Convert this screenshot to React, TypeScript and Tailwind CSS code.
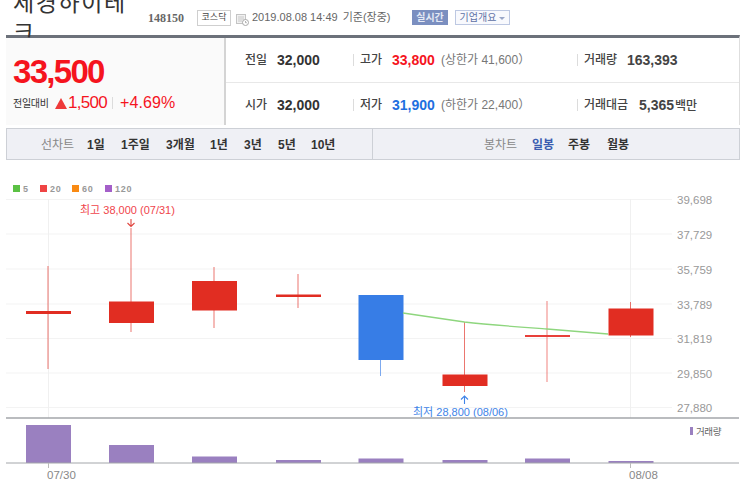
const KR = "font-['Liberation_Sans','Noto_Sans_CJK_KR',sans-serif]";

const candles = [
  { x: 48, top: 266, bottom: 369, open: 311, close: 314, color: "#e12d22" },
  { x: 131, top: 228, bottom: 332, open: 301.5, close: 323, color: "#e12d22" },
  { x: 214, top: 267, bottom: 328, open: 281, close: 310.5, color: "#e12d22" },
  { x: 298, top: 274, bottom: 308, open: 294.5, close: 297, color: "#e12d22" },
  { x: 380.5, top: 295, bottom: 376, open: 295, close: 360, color: "#377de6" },
  { x: 464.5, top: 322, bottom: 392, open: 374.5, close: 386, color: "#e12d22" },
  { x: 547, top: 301, bottom: 382, open: 335, close: 337, color: "#e8403a" },
  { x: 630.5, top: 302, bottom: 337, open: 308.5, close: 335.5, color: "#e12d22" },
];

const volumes = [425, 445, 456.5, 460, 458.5, 460, 458.5, 461];
const yLabels = [
  { y: 199.5, label: "39,698" },
  { y: 234, label: "37,729" },
  { y: 269, label: "35,759" },
  { y: 304, label: "33,789" },
  { y: 338.5, label: "31,819" },
  { y: 373, label: "29,850" },
  { y: 407.5, label: "27,880" },
];
const legend = [
  { x: 13, color: "#5bc144", label: "5" },
  { x: 40, color: "#ef4444", label: "20" },
  { x: 72, color: "#f98a13", label: "60" },
  { x: 105, color: "#a45fc9", label: "120" },
];

const Sep = ({ className = "" }: { className?: string }) => (
  <span className={`h-3 w-px bg-[#dcdcdc] ${className}`} />
);

const Row = ({
  first,
  firstValue,
  second,
  secondValue,
  secondColor,
  limit,
  third,
  thirdValue,
  thirdGap,
}: {
  first: string;
  firstValue: string;
  second: string;
  secondValue: string;
  secondColor: string;
  limit: string;
  third: string;
  thirdValue: React.ReactNode;
  thirdGap: string;
}) => (
  <div className="flex h-[44px] items-center pl-[19px] text-[12px] text-[#444]">
    <span className="w-[32px] font-medium">{first}</span>
    <span className="w-[76px] text-[14px] font-bold text-[#333]">{firstValue}</span>
    <Sep />
    <span className="ml-[6px] w-[32px] font-medium">{second}</span>
    <span className={`w-[49px] text-[14px] font-bold ${secondColor}`}>{secondValue}</span>
    <span className="w-[136px] text-[12px] text-[#777]">{limit}</span>
    <Sep />
    <span className={`ml-[6px] font-medium ${thirdGap}`}>{third}</span>
    {thirdValue}
  </div>
);

const ToolItem = ({ label, className }: { label: string; className: string }) => (
  <span className={`absolute top-[8px] text-[12px] font-bold leading-[16px] ${className}`}>{label}</span>
);

export default function App() {
  return (
    <div className={`h-[484px] w-[743px] overflow-hidden bg-white ${KR}`}>
      {/* Header */}
      <div className="flex h-[35px] items-center pl-[13px]">
        <h1 className="w-[135px] text-[23px] font-normal leading-[30px] tracking-[1.6px] text-[#333]">세경하이테크</h1>
        <span className="w-[49px] font-['Liberation_Serif',serif] text-[12px] font-bold text-[#666]">148150</span>
        <span className="flex h-[16px] w-[34px] items-center justify-center border border-[#cfcfcf] text-[9px] text-[#444]">코스닥</span>
        <svg className="ml-[5px] mt-[3px]" width="13" height="13" viewBox="0 0 13 13">
          <rect x="0.5" y="1.5" width="9" height="9" fill="#f1f1f1" stroke="#c4c4c4" />
          <path d="M2 4h6M2 6h6M2 8h4" stroke="#c9c9c9" />
          <circle cx="9.5" cy="9.5" r="3" fill="#fff" stroke="#a8a8a8" />
          <path d="M9.5 8v1.7h1.3" stroke="#999" fill="none" strokeWidth="0.8" />
        </svg>
        <span className="ml-[3px] w-[160px] text-[11px] text-[#666]">
          2019.08.08 14:49 <span className="ml-[2px]">기준(장중)</span>
        </span>
        <span className="flex h-[15px] w-[36px] items-center justify-center bg-[#7b8fc0] text-[10px] font-bold text-[#e4e9f5]">실시간</span>
        <span className="ml-[7px] flex h-[15px] w-[55px] items-center justify-center gap-[3px] border border-[#bdc8e2] bg-[#f8f9fd] text-[10px] text-[#5d70a5]">
          기업개요
          <span className="mt-[1px] h-0 w-0 border-x-[3px] border-t-[3px] border-x-transparent border-t-[#9aa7c8]" />
        </span>
      </div>

      {/* Quote */}
      <div className="ml-[6px] mr-[3px] flex h-[90px] border-t-[3px] border-r border-t-[#6c717a] border-r-[#dedede]">
        <div className="w-[220px] border-r-2 border-[#d4d4d4] bg-[#fafafa] pl-[7px]">
          <div className="mt-[14px] text-[33px] font-bold leading-[40px] tracking-[-1.7px] text-[#f5141e]">33,500</div>
          <div className="mt-[1px] flex items-center text-[#f5141e]">
            <span className="w-[42px] text-[10px] tracking-[-0.3px] text-[#333]">전일대비</span>
            <span className="h-0 w-0 border-x-[6px] border-b-[11px] border-x-transparent border-b-[#ee3a3a]" />
            <span className="ml-[1px] text-[17px] font-medium leading-[20px] tracking-[-0.7px]">1,500</span>
            <Sep className="ml-[5px]" />
            <span className="ml-[7px] text-[16px] font-medium leading-[20px] tracking-[0.1px]">+4.69%</span>
          </div>
        </div>
        <div className="flex-1">
          <div className="border-b border-[#e8e8e8]">
            <Row
              first="전일"
              firstValue="32,000"
              second="고가"
              secondValue="33,800"
              secondColor="text-[#f5141e]"
              limit="(상한가 41,600）"
              third="거래량"
              thirdGap="w-[43px]"
              thirdValue={<span className="text-[14px] font-bold text-[#444]">163,393</span>}
            />
          </div>
          <Row
            first="시가"
            firstValue="32,000"
            second="저가"
            secondValue="31,900"
            secondColor="text-[#1f6fe0]"
            limit="(하한가 22,400）"
            third="거래대금"
            thirdGap="w-[55px]"
            thirdValue={
              <span className="text-[14px] font-bold text-[#444]">
                5,365<span className="ml-[1px] text-[12px] font-medium">백만</span>
              </span>
            }
          />
        </div>
      </div>

      {/* Period toolbar */}
      <div className="relative ml-[6px] mr-[3px] mt-[3px] h-[32px] border border-[#cdd0d6] bg-[#eff0f5]">
        <span className="absolute left-[365px] top-0 h-[30px] w-px bg-[#cdd0d6]" />
        <ToolItem label="선차트" className="left-[34px] font-normal text-[#888]" />
        <ToolItem label="1일" className="left-[80px] text-[#333]" />
        <ToolItem label="1주일" className="left-[114px] text-[#333]" />
        <ToolItem label="3개월" className="left-[159px] text-[#333]" />
        <ToolItem label="1년" className="left-[203px] text-[#333]" />
        <ToolItem label="3년" className="left-[237px] text-[#333]" />
        <ToolItem label="5년" className="left-[271px] text-[#333]" />
        <ToolItem label="10년" className="left-[304px] text-[#333]" />
        <ToolItem label="봉차트" className="left-[477px] font-normal text-[#888]" />
        <ToolItem label="일봉" className="left-[525px] text-[#3a5cb0]" />
        <ToolItem label="주봉" className="left-[561px] text-[#333]" />
        <ToolItem label="월봉" className="left-[600px] text-[#333]" />
      </div>

      {/* Chart */}
      <svg width="743" height="324" viewBox="0 160 743 324" className="block">
        {legend.map((l) => (
          <g key={l.label}>
            <rect x={l.x} y="185" width="7" height="7" fill={l.color} />
            <text x={l.x + 10} y="192" fontSize="9" fontWeight="700" letterSpacing="0.8" fill="#999">
              {l.label}
            </text>
          </g>
        ))}

        {yLabels.map((l) => (
          <g key={l.label}>
            <line x1="6" x2="672" y1={l.y} y2={l.y} stroke="#f3f3f3" />
            <text x="677" y={l.y + 4.5} fontSize="11.5" fill="#999">
              {l.label}
            </text>
          </g>
        ))}
        <line x1="48.5" x2="48.5" y1="199" y2="418" stroke="#f0f0f0" />
        <line x1="630.5" x2="630.5" y1="199" y2="418" stroke="#f0f0f0" />

        {candles.map((c) => (
          <g key={c.x}>
            <line x1={c.x} x2={c.x} y1={c.top} y2={c.bottom} stroke={c.color} strokeOpacity="0.65" />
            <rect x={c.x - 22} y={c.open} width="45" height={c.close - c.open} fill={c.color} />
          </g>
        ))}
        <path d="M403 313 L464.5 322 C490 325 520 327 547 329 L608 334" fill="none" stroke="#8ed67e" strokeWidth="1.3" />

        <text x="80" y="214" fontSize="11" fill="#f0454c">
          최고 38,000 (07/31)
        </text>
        <path d="M131 219v7M127.5 223l3.5 3.5l3.5-3.5" fill="none" stroke="#e0453f" strokeWidth="1.1" />
        <text x="413" y="415.5" fontSize="11" fill="#3f84e8">
          최저 28,800 (08/06)
        </text>
        <path d="M464.5 396v8M461 399.5l3.5-3.5l3.5 3.5" fill="none" stroke="#3f84e8" strokeWidth="1.1" />

        <line x1="6" x2="739" y1="418" y2="418" stroke="#a3a6aa" strokeWidth="1.3" />
        {candles.map((c, i) => (
          <rect key={c.x} x={c.x - 22} y={volumes[i]} width="45" height={463 - volumes[i]} fill="#9a80c0" />
        ))}
        <line x1="6" x2="739" y1="463" y2="463" stroke="#a3a6aa" strokeWidth="1" />
        <line x1="48.5" x2="48.5" y1="463" y2="468" stroke="#bbb" />
        <line x1="630.5" x2="630.5" y1="463" y2="468" stroke="#bbb" />
        <text x="47" y="479" fontSize="11.5" fill="#888">
          07/30
        </text>
        <text x="629" y="479" fontSize="11.5" fill="#888">
          08/08
        </text>
        <rect x="690" y="427" width="3" height="8" fill="#9a80c0" />
        <text x="696" y="435" fontSize="9.5" letterSpacing="-0.4" fill="#666">
          거래량
        </text>
      </svg>
    </div>
  );
}
